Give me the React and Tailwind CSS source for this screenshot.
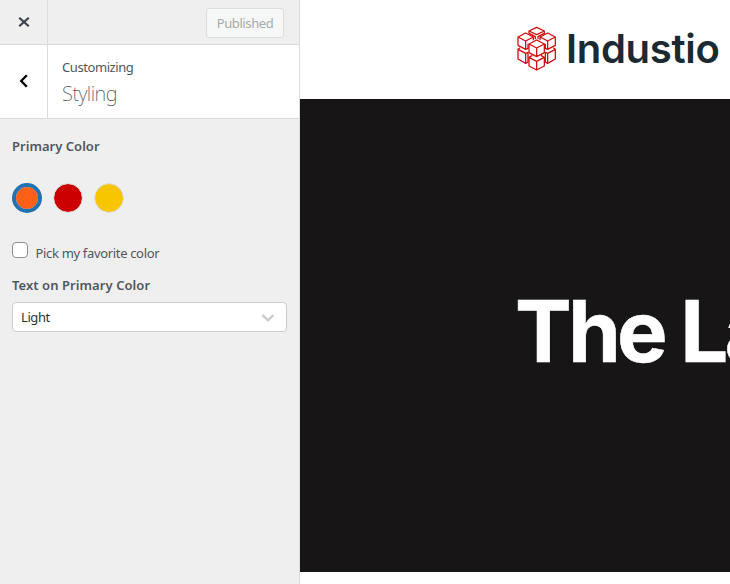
const SWATCHES = [
  { color: 'bg-[#ff6017]', frame: 'border-4 border-[#2271b1]' },
  { color: 'bg-[#cc0000]', frame: 'border border-[#dcdcde]' },
  { color: 'bg-[#f7c600]', frame: 'border border-[#dcdcde]' },
];

function CubeLogo() {
  return (
    <svg className="h-[65px] w-[52px] shrink-0" viewBox="0 0 156 195" fill="none" stroke="#d20a0a" strokeWidth="3.8" strokeLinejoin="round">
      <path d="M95 37 L118 48 L95 59 L72 48 Z M72 48 V55 L91 65 V73 M118 48 V55 L99 65 V73" />
      <path d="M62 54 L85 66 L62 78 L39 66 Z M39 66 V91 L62 103 V78 M85 66 V76 M62 103 L69 100 V86" />
      <path d="M128 54 L151 66 L128 78 L105 66 Z M151 66 V91 L128 103 V78 M105 66 V76 M128 103 L121 100 V86" />
      <path d="M95 75 L118 87 L95 99 L72 87 Z M72 87 V113 L95 125 L118 113 V87 M95 99 V125" />
      <path d="M45 98 L39 103 V132 L62 145 V115 L39 103 M62 115 L69 112 M62 145 L69 141 V112" />
      <path d="M145 98 L151 103 V132 L128 145 V115 L151 103 M128 115 L121 112 M128 145 L121 141 V112" />
      <path d="M82 121 L72 127 V153 L95 165 L118 153 V127 L108 121 M72 127 L95 139 L118 127 M95 139 V165" />
    </svg>
  );
}

function Customizer() {
  return (
    <aside className="flex h-[584px] w-[300px] shrink-0 flex-col border-r border-[#dcdcde] bg-[#efefef] font-['Noto_Sans','Open_Sans',sans-serif] text-[13px] text-[#50575e]">
      <header className="flex h-[45px] shrink-0 border-b border-[#dcdcde]">
        <button aria-label="Close" className="flex w-12 items-center justify-center border-r border-[#dcdcde]">
          <svg className="h-[12px] w-[12px]" viewBox="0 0 12 12" stroke="#3c434a" strokeWidth="2.2">
            <path d="M1.2 1.7 L10.8 10.3 M10.8 1.7 L1.2 10.3" />
          </svg>
        </button>
        <div className="flex flex-1 items-center justify-end pt-px pr-[15px]">
          <button className="h-[30px] w-[78px] rounded-[3px] border border-[#dcdcde] bg-[#f6f7f7] pt-[2px] text-[13px] tracking-[-0.4px] text-[#a7aaad]">Published</button>
        </div>
      </header>
      <div className="flex h-[74px] shrink-0 border-b border-[#dcdcde] bg-white">
        <button aria-label="Back" className="flex w-12 items-center justify-center border-r border-[#dcdcde] pb-[2px]">
          <svg className="h-[14px] w-[10px]" viewBox="0 0 10 14" fill="none" stroke="#000" strokeWidth="2.3">
            <path d="M7.8 1.2 L2.2 7 L7.8 12.8" />
          </svg>
        </button>
        <div className="pt-[13px] pl-[14px]">
          <div className="text-[13px] leading-[19px] tracking-[-0.42px]">Customizing</div>
          <h1 className="mt-[3px] text-[20px] leading-[28px] font-extralight tracking-[-0.5px]">Styling</h1>
        </div>
      </div>
      <div className="px-3 pt-[15px]">
        <h2 className="text-[13px] leading-6 font-semibold tracking-[0.03px]">Primary Color</h2>
        <div className="mt-[25px] flex gap-[11px]">
          {SWATCHES.map((s) => (
            <button key={s.color} aria-label="Color" className={`h-[30px] w-[30px] rounded-full bg-clip-padding ${s.color} ${s.frame}`} />
          ))}
        </div>
        <label className="mt-[29px] flex h-[20px]">
          <span className="h-4 w-4 rounded-[4px] border border-[#8c8f94] bg-white" />
          <span className="pt-[1px] pl-[7.5px] leading-5 tracking-[-0.33px]">Pick my favorite color</span>
        </label>
        <h2 className="mt-[11px] text-[13px] leading-6 font-semibold tracking-[0.07px]">Text on Primary Color</h2>
        <div className="mt-[5px] flex h-[30px] items-center justify-between rounded-[4px] border border-[#cccccc] bg-white pr-3 pl-2 text-[13px] tracking-[-0.4px] text-[#2c3338]">
          <span className="pt-[2px]">Light</span>
          <svg className="mt-px h-[8px] w-[13px]" viewBox="0 0 13 8" fill="none" stroke="#cccccc" strokeWidth="2.4">
            <path d="M1.3 1 L7 6.3 L12.5 1" />
          </svg>
        </div>
      </div>
    </aside>
  );
}

export default function App() {
  return (
    <div className="flex h-[584px] w-[730px] overflow-hidden bg-white">
      <Customizer />
      <main className="min-w-0 flex-1 overflow-hidden font-['Inter','Liberation_Sans',sans-serif]">
        <header className="flex h-[99px] items-start pt-[15px] pl-[205px]">
          <CubeLogo />
          <span className="mt-[9px] ml-[9px] text-[40px] leading-[50px] font-semibold tracking-[-0.3px] text-[#1b2930]">Industio</span>
        </header>
        <section className="flex h-[473px] items-center bg-[#171516] pb-[7px] pl-[215px]">
          <h1 className="text-[85px] leading-[100px] font-bold tracking-[-3.8px] whitespace-nowrap text-white [-webkit-text-stroke:0.5px_white]">The La</h1>
        </section>
      </main>
    </div>
  );
}
